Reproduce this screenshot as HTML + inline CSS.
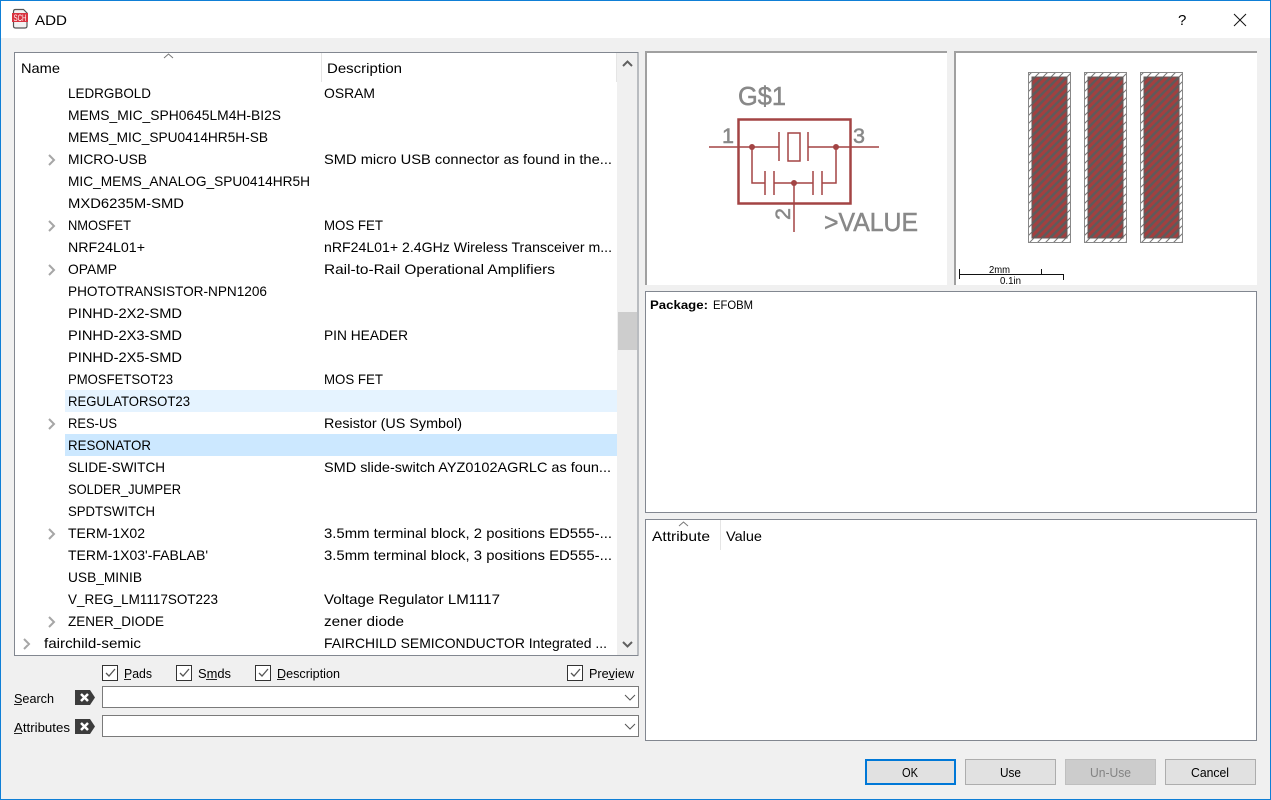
<!DOCTYPE html>
<html><head><meta charset="utf-8"><title>ADD</title>
<style>
html,body{margin:0;padding:0;background:#f0f0f0;overflow:hidden}
svg{display:block;position:absolute;left:0;top:0}
text{font-family:"Liberation Sans",sans-serif;font-size:14px;fill:#000}
.s{font-size:12.5px}
.v{fill:#888;stroke:#888;stroke-width:.5}
.b{fill:#e1e1e1;stroke:#adadad}
.f{fill:#fff;stroke:#828790}
.sch{fill:none;stroke:#a34444;stroke-width:1.5}
.ar{fill:none;stroke:#a6a6a6;stroke-width:2}
.ca{fill:none;stroke:#606060;stroke-width:1.2}
.ck{fill:#fff;stroke:#333}
.tk{fill:none;stroke:#555;stroke-width:1.3}
</style></head><body>
<svg width="1271" height="800" viewBox="0 0 1271 800" xmlns="http://www.w3.org/2000/svg" shape-rendering="crispEdges">
<defs>
<pattern id="h" width="8" height="8" patternUnits="userSpaceOnUse"><rect width="8" height="8" fill="#a33f3f"/><path d="M-2 10L10 -2M-2 2L2 -2M6 10L10 6" stroke="#5f5a5a" stroke-width="2.600" fill="none" shape-rendering="auto"/></pattern>
<pattern id="w" width="8" height="8" patternUnits="userSpaceOnUse"><rect width="8" height="8" fill="#fff"/><path d="M-2 10L10 -2M-2 2L2 -2M6 10L10 6" stroke="#777" stroke-width="1" fill="none" shape-rendering="auto"/></pattern>
</defs>
<rect width="1271" height="800" fill="#f0f0f0"/>
<rect width="1271" height="38" fill="#fff"/>
<rect x="0.5" y="0.5" width="1270" height="799" fill="none" stroke="#0f7fd6"/>
<!-- title -->
<g shape-rendering="auto">
<path d="M15.500 9.500h8l3.500 3.500v13q0 2-2 2h-9.500q-2 0-2-2v-14.500q0-2 2-2z" fill="#f2f2f2" stroke="#555" stroke-width="1.200"/>
<rect x="12" y="13" width="16" height="9" fill="#d9333f"/>
<text x="13.500" y="21" textLength="13" lengthAdjust="spacingAndGlyphs" style="font-size:9px;fill:#fff">SCH</text>
</g>
<text x="35" y="25" textLength="32" lengthAdjust="spacingAndGlyphs">ADD</text>
<text x="1178" y="25" style="font-size:15px">?</text>
<path d="M1234 14l12 12M1246 14l-12 12" stroke="#111" fill="none" shape-rendering="auto"/>
<!-- tree -->
<rect x="14.5" y="52.5" width="623.5" height="603" class="f"/>
<rect x="617" y="53" width="20.5" height="602" fill="#f0f0f0"/>
<rect x="618" y="312" width="19" height="38" fill="#cdcdcd"/>
<rect x="321" y="53" width="1" height="29" fill="#e5e5e5"/>
<rect x="616" y="53" width="1" height="29" fill="#e5e5e5"/>
<path d="M164 58l4.500-4 4.500 4" fill="none" stroke="#777" shape-rendering="auto"/>
<path d="M623 66l4.500-4.500 4.500 4.500" class="ca" style="stroke-width:2" shape-rendering="auto"/>
<path d="M623 642l4.500 4.500 4.500-4.500" class="ca" style="stroke-width:2" shape-rendering="auto"/>
<text x="21" y="73" textLength="39" lengthAdjust="spacingAndGlyphs">Name</text>
<text x="327" y="73" textLength="75" lengthAdjust="spacingAndGlyphs">Description</text>
<rect x="65" y="390" width="552" height="22" fill="#e5f3ff"/>
<rect x="65" y="434" width="552" height="22" fill="#cce8ff"/>
<g shape-rendering="auto">
<text x="68" y="98" textLength="83" lengthAdjust="spacingAndGlyphs">LEDRGBOLD</text>
<text x="324" y="98" textLength="51" lengthAdjust="spacingAndGlyphs">OSRAM</text>
<text x="68" y="120" textLength="213" lengthAdjust="spacingAndGlyphs">MEMS_MIC_SPH0645LM4H-BI2S</text>
<text x="68" y="142" textLength="200" lengthAdjust="spacingAndGlyphs">MEMS_MIC_SPU0414HR5H-SB</text>
<text x="68" y="164" textLength="79" lengthAdjust="spacingAndGlyphs">MICRO-USB</text>
<text x="324" y="164" textLength="288" lengthAdjust="spacingAndGlyphs">SMD micro USB connector as found in the...</text>
<text x="68" y="186" textLength="242" lengthAdjust="spacingAndGlyphs">MIC_MEMS_ANALOG_SPU0414HR5H</text>
<text x="68" y="208" textLength="116" lengthAdjust="spacingAndGlyphs">MXD6235M-SMD</text>
<text x="68" y="230" textLength="63" lengthAdjust="spacingAndGlyphs">NMOSFET</text>
<text x="324" y="230" textLength="59" lengthAdjust="spacingAndGlyphs">MOS FET</text>
<text x="68" y="252" textLength="77" lengthAdjust="spacingAndGlyphs">NRF24L01+</text>
<text x="324" y="252" textLength="288" lengthAdjust="spacingAndGlyphs">nRF24L01+ 2.4GHz Wireless Transceiver m...</text>
<text x="68" y="274" textLength="49" lengthAdjust="spacingAndGlyphs">OPAMP</text>
<text x="324" y="274" textLength="231" lengthAdjust="spacingAndGlyphs">Rail-to-Rail Operational Amplifiers</text>
<text x="68" y="296" textLength="199" lengthAdjust="spacingAndGlyphs">PHOTOTRANSISTOR-NPN1206</text>
<text x="68" y="318" textLength="114" lengthAdjust="spacingAndGlyphs">PINHD-2X2-SMD</text>
<text x="68" y="340" textLength="114" lengthAdjust="spacingAndGlyphs">PINHD-2X3-SMD</text>
<text x="324" y="340" textLength="84" lengthAdjust="spacingAndGlyphs">PIN HEADER</text>
<text x="68" y="362" textLength="114" lengthAdjust="spacingAndGlyphs">PINHD-2X5-SMD</text>
<text x="68" y="384" textLength="105" lengthAdjust="spacingAndGlyphs">PMOSFETSOT23</text>
<text x="324" y="384" textLength="59" lengthAdjust="spacingAndGlyphs">MOS FET</text>
<text x="68" y="406" textLength="122" lengthAdjust="spacingAndGlyphs">REGULATORSOT23</text>
<text x="68" y="428" textLength="49" lengthAdjust="spacingAndGlyphs">RES-US</text>
<text x="324" y="428" textLength="138" lengthAdjust="spacingAndGlyphs">Resistor (US Symbol)</text>
<text x="68" y="450" textLength="83" lengthAdjust="spacingAndGlyphs">RESONATOR</text>
<text x="68" y="472" textLength="97" lengthAdjust="spacingAndGlyphs">SLIDE-SWITCH</text>
<text x="324" y="472" textLength="287" lengthAdjust="spacingAndGlyphs">SMD slide-switch AYZ0102AGRLC as foun...</text>
<text x="68" y="494" textLength="113" lengthAdjust="spacingAndGlyphs">SOLDER_JUMPER</text>
<text x="68" y="516" textLength="87" lengthAdjust="spacingAndGlyphs">SPDTSWITCH</text>
<text x="68" y="538" textLength="77" lengthAdjust="spacingAndGlyphs">TERM-1X02</text>
<text x="324" y="538" textLength="288" lengthAdjust="spacingAndGlyphs">3.5mm terminal block, 2 positions ED555-...</text>
<text x="68" y="560" textLength="140" lengthAdjust="spacingAndGlyphs">TERM-1X03'-FABLAB'</text>
<text x="324" y="560" textLength="288" lengthAdjust="spacingAndGlyphs">3.5mm terminal block, 3 positions ED555-...</text>
<text x="68" y="582" textLength="74" lengthAdjust="spacingAndGlyphs">USB_MINIB</text>
<text x="68" y="604" textLength="150" lengthAdjust="spacingAndGlyphs">V_REG_LM1117SOT223</text>
<text x="324" y="604" textLength="176" lengthAdjust="spacingAndGlyphs">Voltage Regulator LM1117</text>
<text x="68" y="626" textLength="96" lengthAdjust="spacingAndGlyphs">ZENER_DIODE</text>
<text x="324" y="626" textLength="80" lengthAdjust="spacingAndGlyphs">zener diode</text>
<text x="44" y="648" textLength="97" lengthAdjust="spacingAndGlyphs">fairchild-semic</text>
<text x="324" y="648" textLength="283" lengthAdjust="spacingAndGlyphs">FAIRCHILD SEMICONDUCTOR Integrated ...</text>
<path class="ar" d="M49 155l5 5-5 5M49 221l5 5-5 5M49 265l5 5-5 5M49 419l5 5-5 5M49 529l5 5-5 5M49 617l5 5-5 5M24 639l5 5-5 5"/>
</g>
<!-- preview left -->
<rect x="645" y="51" width="302" height="234" fill="#fff"/>
<rect x="645" y="51" width="302" height="2" fill="#a0a0a0"/>
<rect x="645" y="51" width="2" height="234" fill="#a0a0a0"/>
<g shape-rendering="auto">
<rect x="738.500" y="119.500" width="112" height="84" fill="none" stroke="#a34444" stroke-width="2.500"/>
<path class="sch" d="M709 147H779M808 147H879M779 132V161M808 132V161M752 147V183H765M765 171V195M774 171V195M774 183H813M813 171V195M822 171V195M822 183H836V147M794 183V232"/>
<rect x="788" y="133" width="12" height="28" class="sch"/>
<circle cx="752" cy="147" r="3" fill="#a34444"/><circle cx="836" cy="147" r="3" fill="#a34444"/><circle cx="794" cy="183" r="3" fill="#a34444"/>
<text class="v" x="738" y="105" textLength="48" lengthAdjust="spacingAndGlyphs" style="font-size:26px">G$1</text>
<text class="v" x="722" y="143" textLength="12" lengthAdjust="spacingAndGlyphs" style="font-size:21px">1</text>
<text class="v" x="853" y="143" textLength="12" lengthAdjust="spacingAndGlyphs" style="font-size:21px">3</text>
<text class="v" transform="translate(790 220) rotate(-90)" x="0" y="0" textLength="12" lengthAdjust="spacingAndGlyphs" style="font-size:21px">2</text>
<text class="v" x="824" y="231" textLength="94" lengthAdjust="spacingAndGlyphs" style="font-size:26px">&gt;VALUE</text>
</g>
<!-- preview right -->
<rect x="954" y="51" width="303" height="234" fill="#fff"/>
<rect x="954" y="51" width="303" height="2" fill="#a0a0a0"/>
<rect x="954" y="51" width="2" height="234" fill="#a0a0a0"/>
<g>
<rect x="1028.500" y="72.500" width="42" height="170" fill="url(#w)" stroke="#888"/><rect x="1032" y="77" width="35" height="161" fill="url(#h)" stroke="#665a5a"/>
<rect x="1084.500" y="72.500" width="42" height="170" fill="url(#w)" stroke="#888"/><rect x="1088" y="77" width="35" height="161" fill="url(#h)" stroke="#665a5a"/>
<rect x="1140.500" y="72.500" width="42" height="170" fill="url(#w)" stroke="#888"/><rect x="1144" y="77" width="35" height="161" fill="url(#h)" stroke="#665a5a"/>
<path d="M959.500 269V279M959 274.500H1064M1041.500 269V274M1063.500 275V280" stroke="#111" fill="none"/>
</g>
<text x="989" y="273" textLength="21" lengthAdjust="spacingAndGlyphs" style="font-size:10px">2mm</text>
<text x="1000" y="284" textLength="21" lengthAdjust="spacingAndGlyphs" style="font-size:10px">0.1in</text>
<!-- info -->
<rect x="645.500" y="291.500" width="611" height="221" class="f"/>
<text x="650" y="309" textLength="58" lengthAdjust="spacingAndGlyphs" style="font-size:12px;font-weight:bold">Package:</text>
<text x="713" y="309" textLength="40" lengthAdjust="spacingAndGlyphs" style="font-size:12px">EFOBM</text>
<!-- attributes -->
<rect x="645.500" y="519.500" width="611" height="221" class="f"/>
<rect x="720" y="520" width="1" height="30" fill="#e5e5e5"/>
<path d="M679 526l4.500-4 4.500 4" fill="none" stroke="#777" shape-rendering="auto"/>
<text x="652" y="541" textLength="58" lengthAdjust="spacingAndGlyphs">Attribute</text>
<text x="726" y="541" textLength="36" lengthAdjust="spacingAndGlyphs">Value</text>
<!-- checks -->
<rect x="102.500" y="665.500" width="15" height="15" class="ck"/><path class="tk" shape-rendering="auto" d="M106 673l3 3 6-7"/>
<rect x="176.500" y="665.500" width="15" height="15" class="ck"/><path class="tk" shape-rendering="auto" d="M180 673l3 3 6-7"/>
<rect x="255.500" y="665.500" width="15" height="15" class="ck"/><path class="tk" shape-rendering="auto" d="M259 673l3 3 6-7"/>
<rect x="567.500" y="665.500" width="15" height="15" class="ck"/><path class="tk" shape-rendering="auto" d="M571 673l3 3 6-7"/>
<text class="s" x="124" y="678" textLength="28" lengthAdjust="spacingAndGlyphs">Pads</text>
<text class="s" x="198" y="678" textLength="33" lengthAdjust="spacingAndGlyphs">Smds</text>
<text class="s" x="277" y="678" textLength="63" lengthAdjust="spacingAndGlyphs">Description</text>
<text class="s" x="589" y="678" textLength="45" lengthAdjust="spacingAndGlyphs">Preview</text>
<path d="M124 679.500h7M206 679.500h11M277 679.500h8M608 679.500h6M14 704.500h8M14 733.500h8" stroke="#222" fill="none"/>
<text class="s" x="14" y="703" textLength="40" lengthAdjust="spacingAndGlyphs">Search</text>
<text class="s" x="14" y="732" textLength="56" lengthAdjust="spacingAndGlyphs">Attributes</text>
<g shape-rendering="auto">
<path d="M75 690h15l5 7.500-5 7.500h-15z" fill="#3c3c3c"/><path d="M81 694l7 7M88 694l-7 7" stroke="#fff" stroke-width="2.500"/>
<path d="M75 719h15l5 7.500-5 7.500h-15z" fill="#3c3c3c"/><path d="M81 723l7 7M88 723l-7 7" stroke="#fff" stroke-width="2.500"/>
</g>
<rect x="102.500" y="686.500" width="536" height="21" fill="#fff" stroke="#7a7a7a"/>
<rect x="102.500" y="715.500" width="536" height="21" fill="#fff" stroke="#7a7a7a"/>
<path d="M625 695l5 5 5-5M625 724l5 5 5-5" fill="none" stroke="#555" shape-rendering="auto"/>
<!-- buttons -->
<rect x="866" y="760" width="89" height="24" fill="#e1e1e1" stroke="#0078d7" stroke-width="2"/>
<rect x="965.500" y="759.500" width="90" height="25" class="b"/>
<rect x="1065.500" y="759.500" width="90" height="25" fill="#cccccc" stroke="#bfbfbf"/>
<rect x="1165.500" y="759.500" width="90" height="25" class="b"/>
<text class="s" x="902" y="777" textLength="16" lengthAdjust="spacingAndGlyphs">OK</text>
<text class="s" x="1000" y="777" textLength="21" lengthAdjust="spacingAndGlyphs">Use</text>
<text class="s" x="1090" y="777" textLength="41" lengthAdjust="spacingAndGlyphs" style="fill:#838383">Un-Use</text>
<text class="s" x="1191" y="777" textLength="38" lengthAdjust="spacingAndGlyphs">Cancel</text>
</svg>
</body></html>
